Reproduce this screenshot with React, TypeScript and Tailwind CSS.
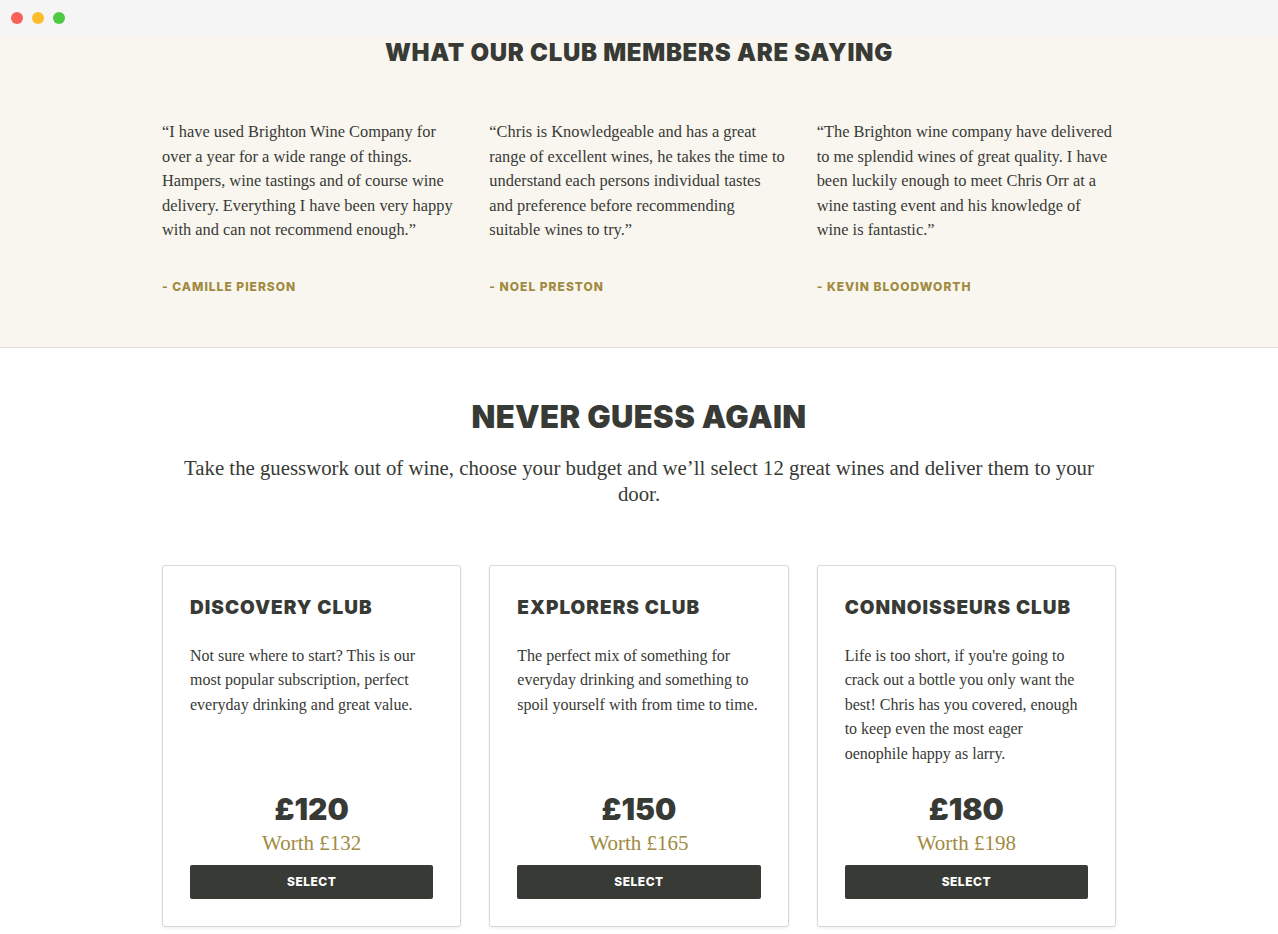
import React from "react";

const testimonials = [
  {
    quote:
      "“I have used Brighton Wine Company for over a year for a wide range of things. Hampers, wine tastings and of course wine delivery. Everything I have been very happy with and can not recommend enough.”",
    name: "- Camille Pierson",
  },
  {
    quote:
      "“Chris is Knowledgeable and has a great range of excellent wines, he takes the time to understand each persons individual tastes and preference before recommending suitable wines to try.”",
    name: "- Noel Preston",
  },
  {
    quote:
      "“The Brighton wine company have delivered to me splendid wines of great quality. I have been luckily enough to meet Chris Orr at a wine tasting event and his knowledge of wine is fantastic.”",
    name: "- Kevin Bloodworth",
  },
];

const clubs = [
  {
    title: "Discovery Club",
    desc: "Not sure where to start? This is our most popular subscription, perfect everyday drinking and great value.",
    price: "£120",
    worth: "Worth £132",
  },
  {
    title: "Explorers Club",
    desc: "The perfect mix of something for everyday drinking and something to spoil yourself with from time to time.",
    price: "£150",
    worth: "Worth £165",
  },
  {
    title: "Connoisseurs Club",
    desc: "Life is too short, if you're going to crack out a bottle you only want the best! Chris has you covered, enough to keep even the most eager oenophile happy as larry.",
    price: "£180",
    worth: "Worth £198",
  },
];

const sans = "font-['Inter',sans-serif]";
const serif = "font-['Liberation_Serif',serif]";

const App = () => {
  return (
    <div className="w-[1278px] min-h-[934px] bg-white text-[#383a35]">
      {/* window bar */}
      <div className="h-[36px] bg-[#f5f5f5] flex items-center gap-[9px] pl-[11px]">
        <span className="w-[12px] h-[12px] rounded-full bg-[#f96057]" />
        <span className="w-[12px] h-[12px] rounded-full bg-[#fbbd2e]" />
        <span className="w-[12px] h-[12px] rounded-full bg-[#4ec943]" />
      </div>

      {/* testimonials */}
      <section className="bg-[#f9f6f0] border-b border-[#e2ded6] pt-[2px] pb-[52px]">
        <h2 className={`${sans} text-center text-[24px] leading-[30px] font-black uppercase tracking-[0.7px]`}>
          What our club members are saying
        </h2>
        <div className="mx-auto w-[954px] grid grid-cols-3 gap-[28px] mt-[52px]">
          {testimonials.map((t) => (
            <div key={t.name} className="pr-[3px]">
              <p className={`${serif} text-[16.4px] leading-[24.6px]`}>{t.quote}</p>
              <div className={`${sans} mt-[36px] text-[12px] leading-[16px] font-extrabold uppercase tracking-[1px] text-[#a08a40]`}>
                {t.name}
              </div>
            </div>
          ))}
        </div>
      </section>

      {/* clubs */}
      <section className="pt-[49px] pb-[8px]">
        <h2 className={`${sans} text-center text-[31px] leading-[40px] font-black uppercase tracking-[0.4px]`}>
          Never guess again
        </h2>
        <p className={`${serif} mx-auto w-[940px] text-center text-[20.8px] leading-[26px] mt-[18px]`}>
          Take the guesswork out of wine, choose your budget and we’ll select 12 great wines and deliver them to your door.
        </p>
        <div className="mx-auto w-[954px] grid grid-cols-3 gap-[28px] mt-[58px]">
          {clubs.map((c) => (
            <div
              key={c.title}
              className="flex flex-col border border-[#d9d9d9] rounded-[3px] shadow-[0_1px_3px_rgba(0,0,0,0.08)] px-[27px] pt-[31px] pb-[27px] bg-white"
            >
              <h3 className={`${sans} text-[19px] leading-[22px] font-black uppercase tracking-[1px]`}>{c.title}</h3>
              <p className={`${serif} mt-[25px] text-[16px] leading-[24.5px]`}>{c.desc}</p>
              <div className="mt-auto pt-[24px] flex flex-col items-center">
                <div className={`${sans} text-[30px] leading-[38px] font-black`}>{c.price}</div>
                <div className={`${serif} mt-[2px] text-[21px] leading-[26px] text-[#a08a40]`}>{c.worth}</div>
                <button className={`${sans} mt-[9px] w-full h-[34px] bg-[#383a35] text-white text-[12px] font-extrabold uppercase tracking-[0.5px] rounded-[2px]`}>
                  Select
                </button>
              </div>
            </div>
          ))}
        </div>
      </section>
    </div>
  );
};

export default App;
